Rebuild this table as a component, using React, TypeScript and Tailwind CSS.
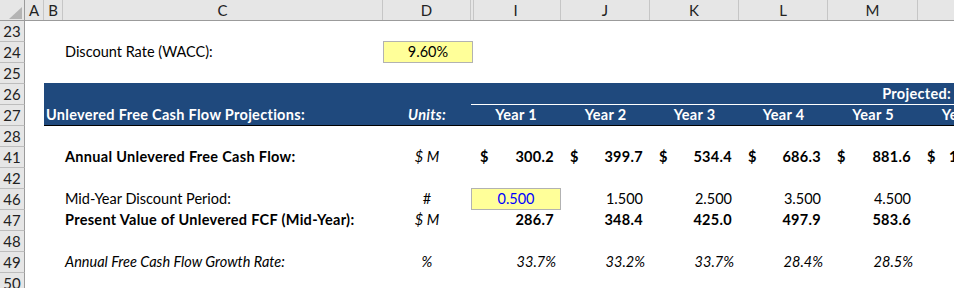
import React from 'react';

// column widths in px (include the 1px grid line on the right)
const W = { hdr: 25, A: 19, B: 19, C: 320, D: 88, I: 90, J: 89, K: 89, L: 89, M: 90, N: 89 };
const YEARS = ['I', 'J', 'K', 'L', 'M', 'N'] as const;

const DATA = [
  { year: 'Year 1', fcf: '300.2', per: '0.500', pv: '286.7', g: '33.7%' },
  { year: 'Year 2', fcf: '399.7', per: '1.500', pv: '348.4', g: '33.2%' },
  { year: 'Year 3', fcf: '534.4', per: '2.500', pv: '425.0', g: '33.7%' },
  { year: 'Year 4', fcf: '686.3', per: '3.500', pv: '497.9', g: '28.4%' },
  { year: 'Year 5', fcf: '881.6', per: '4.500', pv: '583.6', g: '28.5%' },
  { year: 'Year 6', fcf: '1,102.7', per: '5.500', pv: '666.0', g: '25.1%' },
];

function RowNum({ n }: { n: number }) {
  return (
    <div
      className="shrink-0 h-full flex items-center justify-center bg-[#e6e6e6] border-r border-b border-r-[#9b9b9b] border-b-[#bdbdbd] text-[15px] text-[#222] box-border"
      style={{ width: W.hdr }}
    >
      {n}
    </div>
  );
}

function Row({ n, children }: { n: number; children?: React.ReactNode }) {
  return (
    <div className="flex h-[21px] items-stretch">
      <RowNum n={n} />
      <div className="shrink-0" style={{ width: W.A }} />
      {children}
    </div>
  );
}

function Cell({ w, className = '', children }: { w: number; className?: string; children?: React.ReactNode }) {
  return (
    <div className={`shrink-0 flex items-center whitespace-nowrap ${className}`} style={{ width: w }}>
      {children}
    </div>
  );
}

export default function App() {
  const hdrCell = 'shrink-0 h-full flex items-center justify-center border-r border-[#c6c6c6] box-border';
  return (
    <div className="w-[954px] h-[288px] overflow-hidden bg-white font-[Lato,sans-serif] text-[14.5px] text-black leading-none">
      {/* column header */}
      <div className="flex h-[21px] bg-[#e6e6e6] border-b border-[#9b9b9b] text-[#222] text-[15px]">
        <div className="shrink-0 h-full relative border-r border-[#9b9b9b] box-border" style={{ width: W.hdr }}>
          <svg className="absolute left-[9px] top-[7px]" width="13" height="12" viewBox="0 0 13 12">
            <polygon points="13,0 13,12 0,12" fill="#b4b4b4" />
          </svg>
        </div>
        <div className={hdrCell} style={{ width: W.A }}>A</div>
        <div className={hdrCell} style={{ width: W.B }}>B</div>
        <div className={hdrCell} style={{ width: W.C }}>C</div>
        <div className={hdrCell} style={{ width: W.D }}>D</div>
        <div className={`${hdrCell} relative`} style={{ width: W.I }}>
          <div className="absolute left-[2px] top-0 h-full w-px bg-[#c6c6c6]" />
          I
        </div>
        <div className={hdrCell} style={{ width: W.J }}>J</div>
        <div className={hdrCell} style={{ width: W.K }}>K</div>
        <div className={hdrCell} style={{ width: W.L }}>L</div>
        <div className={hdrCell} style={{ width: W.M }}>M</div>
        <div className={hdrCell} style={{ width: W.N }}>N</div>
      </div>

      <Row n={23} />
      <Row n={24}>
        <Cell w={W.B} />
        <Cell w={W.C} className="pl-[2px]">Discount Rate (WACC):</Cell>
        <div
          className="shrink-0 self-start -mt-px h-[22px] flex items-center justify-center bg-[#ffff99] border border-[#b2b2b2] box-border"
          style={{ width: W.D + 2 }}
        >
          9.60%
        </div>
      </Row>
      <Row n={25} />

      {/* blue header band */}
      <Row n={26}>
        <div className="flex-1 flex -mt-px bg-[#1f497d] text-white font-bold tracking-[0.3px]">
          <Cell w={W.B + W.C + W.D} />
          <div className="flex-1 flex items-center justify-end pt-px pr-[3px] border-b border-white whitespace-nowrap">
            Projected:
          </div>
        </div>
      </Row>
      <Row n={27}>
        <div className="flex-1 flex bg-[#1f497d] text-white font-bold tracking-[0.3px] border-b border-black">
          <Cell w={W.B + W.C} className="pl-[2px]">Unlevered Free Cash Flow Projections:</Cell>
          <Cell w={W.D} className="justify-center italic">Units:</Cell>
          {DATA.map((d, i) => (
            <Cell key={i} w={W[YEARS[i]]} className="justify-center">{d.year}</Cell>
          ))}
        </div>
      </Row>
      <Row n={28} />

      <Row n={41}>
        <Cell w={W.B} />
        <Cell w={W.C} className="pl-[2px] font-bold tracking-[0.3px]">Annual Unlevered Free Cash Flow:</Cell>
        <Cell w={W.D} className="justify-center italic">$ M</Cell>
        {DATA.map((d, i) => (
          <Cell key={i} w={W[YEARS[i]]} className="justify-between pl-[9px] pr-[7px] font-bold tracking-[0.3px]">
            <span>$</span>
            <span>{d.fcf}</span>
          </Cell>
        ))}
      </Row>
      <Row n={42} />

      <Row n={46}>
        <Cell w={W.B} />
        <Cell w={W.C} className="pl-[2px]">Mid-Year Discount Period:</Cell>
        <Cell w={W.D} className="justify-center">#</Cell>
        {DATA.map((d, i) =>
          i === 0 ? (
            <div
              key={i}
              className="shrink-0 self-start -mt-px h-[22px] flex items-center justify-center bg-[#ffff99] border border-[#b2b2b2] box-border text-[#0000ff]"
              style={{ width: W.I }}
            >
              {d.per}
            </div>
          ) : (
            <Cell key={i} w={W[YEARS[i]]} className="justify-end pr-[7px]">{d.per}</Cell>
          )
        )}
      </Row>
      <Row n={47}>
        <Cell w={W.B} />
        <Cell w={W.C} className="pl-[2px] font-bold tracking-[0.3px]">Present Value of Unlevered FCF (Mid-Year):</Cell>
        <Cell w={W.D} className="justify-center italic">$ M</Cell>
        {DATA.map((d, i) => (
          <Cell key={i} w={W[YEARS[i]]} className="justify-end pr-[7px] font-bold tracking-[0.3px]">{d.pv}</Cell>
        ))}
      </Row>
      <Row n={48} />

      <Row n={49}>
        <Cell w={W.B} />
        <Cell w={W.C} className="pl-[2px] italic">Annual Free Cash Flow Growth Rate:</Cell>
        <Cell w={W.D} className="justify-center italic">%</Cell>
        {DATA.map((d, i) => (
          <Cell key={i} w={W[YEARS[i]]} className="justify-end pr-[5px] italic">{d.g}</Cell>
        ))}
      </Row>
      <Row n={50} />
    </div>
  );
}
